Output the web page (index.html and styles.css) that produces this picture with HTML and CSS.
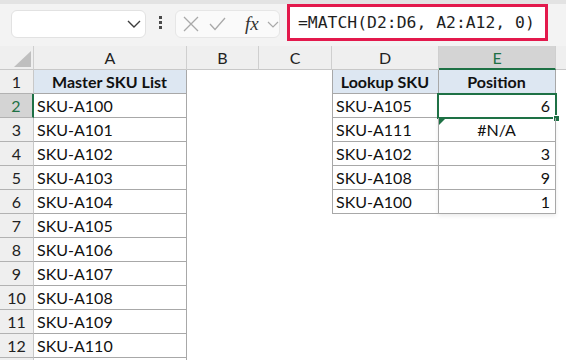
FILE: index.html
```html
<!DOCTYPE html>
<html>
<head>
<meta charset="utf-8">
<link rel="stylesheet" href="styles.css">
</head>
<body>
<div class="edge"></div>
<div class="toolbar">
  <div class="namebox">
    <svg class="nb-chev" width="14" height="8" viewBox="0 0 14 8"><path d="M1 1 L7 7 L13 1" fill="none" stroke="#3c3c3c" stroke-width="1.4"/></svg>
  </div>
  <div class="grip"><i></i><i></i><i></i></div>
  <div class="fxbox">
    <svg class="ic-x" width="16" height="16" viewBox="0 0 16 16"><path d="M1 1 L15 15 M15 1 L1 15" stroke="#a9a9a9" stroke-width="1.3" fill="none"/></svg>
    <svg class="ic-ok" width="17" height="14" viewBox="0 0 17 14"><path d="M1 7 L6 12.5 L16 1" stroke="#a9a9a9" stroke-width="1.3" fill="none"/></svg>
    <span class="fx">fx</span>
    <svg class="ic-dd" width="12" height="7" viewBox="0 0 12 7"><path d="M1 1 L6 6 L11 1" fill="none" stroke="#a9a9a9" stroke-width="1.2"/></svg>
  </div>
  <div class="formula">=MATCH(D2:D6, A2:A12, 0)</div>
</div>
<div class="sheet">
  <div class="corner"><svg width="34" height="24" viewBox="0 0 34 24"><polygon points="14,21 31,21 31,5" fill="#bfbfbf"/></svg></div>
  <div class="ch">A</div><div class="ch">B</div><div class="ch">C</div><div class="ch">D</div><div class="ch csel">E</div><div class="ch last"></div>

  <div class="rh">1</div><div class="c t hd">Master SKU List</div><div class="c"></div><div class="c"></div><div class="c t tl hd">Lookup SKU</div><div class="c t hd">Position</div><div class="c"></div>

  <div class="rh rsel">2</div><div class="c t">SKU-A100</div><div class="c"></div><div class="c"></div><div class="c t tl">SKU-A105</div><div class="c t num e2">6<div class="spill"></div><div class="active"><span class="handle"></span></div></div><div class="c"></div>

  <div class="rh">3</div><div class="c t">SKU-A101</div><div class="c"></div><div class="c"></div><div class="c t tl">SKU-A111</div><div class="c t ctr err"><span class="tri"></span>#N/A</div><div class="c"></div>

  <div class="rh">4</div><div class="c t">SKU-A102</div><div class="c"></div><div class="c"></div><div class="c t tl">SKU-A102</div><div class="c t num">3</div><div class="c"></div>

  <div class="rh">5</div><div class="c t">SKU-A103</div><div class="c"></div><div class="c"></div><div class="c t tl">SKU-A108</div><div class="c t num">9</div><div class="c"></div>

  <div class="rh">6</div><div class="c t">SKU-A104</div><div class="c"></div><div class="c"></div><div class="c t tl">SKU-A100</div><div class="c t num">1</div><div class="c"></div>

  <div class="rh">7</div><div class="c t">SKU-A105</div><div class="c"></div><div class="c"></div><div class="c"></div><div class="c"></div><div class="c"></div>
  <div class="rh">8</div><div class="c t">SKU-A106</div><div class="c"></div><div class="c"></div><div class="c"></div><div class="c"></div><div class="c"></div>
  <div class="rh">9</div><div class="c t">SKU-A107</div><div class="c"></div><div class="c"></div><div class="c"></div><div class="c"></div><div class="c"></div>
  <div class="rh">10</div><div class="c t">SKU-A108</div><div class="c"></div><div class="c"></div><div class="c"></div><div class="c"></div><div class="c"></div>
  <div class="rh">11</div><div class="c t">SKU-A109</div><div class="c"></div><div class="c"></div><div class="c"></div><div class="c"></div><div class="c"></div>
  <div class="rh">12</div><div class="c t">SKU-A110</div><div class="c"></div><div class="c"></div><div class="c"></div><div class="c"></div><div class="c"></div>
  <div class="rh"></div><div class="c t"></div><div class="c"></div><div class="c"></div><div class="c"></div><div class="c"></div><div class="c"></div>
</div>
</body>
</html>
```
FILE: styles.css
```css
* { box-sizing: border-box; }
html, body { margin: 0; padding: 0; }
body {
  width: 566px;
  height: 360px;
  overflow: hidden;
  background: #fff;
  font-family: "Lato", "Open Sans", sans-serif;
  font-size: 16px;
  color: #111;
}
.edge {
  height: 4px;
  background: #e3e3e3;
}
.toolbar {
  height: 42px;
  background: #f3f3f3;
  display: flex;
  align-items: flex-start;
  padding-left: 11px;
}
.namebox {
  margin-top: 6px;
  width: 135px;
  height: 28px;
  background: #fff;
  border: 1px solid #e2e2e2;
  border-radius: 6px;
  display: flex;
  align-items: center;
  justify-content: flex-end;
  padding-right: 4px;
}
.grip {
  width: 29px;
  height: 42px;
  display: flex;
  flex-direction: column;
  align-items: center;
  justify-content: center;
  gap: 2px;
  padding-bottom: 6px;
}
.grip i {
  display: block;
  width: 3px;
  height: 3px;
  background: #4a4a4a;
}
.fxbox {
  margin-top: 6px;
  width: 105px;
  height: 28px;
  background: #fafafa;
  border: 1px solid #e6e6e6;
  border-radius: 6px;
  display: flex;
  align-items: center;
  padding-left: 7px;
}
.ic-ok { margin-left: 10px; }
.fx {
  font-family: "Liberation Serif", serif;
  font-style: italic;
  font-size: 19px;
  color: #333;
  margin-left: 19px;
}
.ic-dd { margin-left: 8px; }
.formula {
  margin-left: 7px;
  width: 261px;
  height: 37px;
  background: #fff;
  border: 3px solid #e3194c;
  font-family: "DejaVu Sans Mono", monospace;
  font-size: 16.4px;
  line-height: 31px;
  padding-left: 8px;
  color: #1e1e1e;
  white-space: nowrap;
}
.sheet {
  display: grid;
  grid-template-columns: 34px 153px 72px 73px 107px 117px 1fr;
  grid-auto-rows: 24px;
}
.corner {
  background: #efefef;
  border-right: 1px solid #cfcfcf;
  border-bottom: 1px solid #c8c8c8;
}
.corner svg { display: block; }
.ch {
  background: #efefef;
  border-right: 1px solid #cfcfcf;
  border-bottom: 1px solid #c8c8c8;
  text-align: center;
  line-height: 23px;
  color: #222;
}
.ch.last { border-right: none; }
.ch.csel {
  background: #d4d4d4;
  color: #1e7145;
  border-bottom: 2px solid #1e7145;
}
.rh {
  background: #efefef;
  border-right: 1px solid #c8c8c8;
  border-bottom: 1px solid #b2b2b2;
  text-align: center;
  line-height: 24px;
  color: #222;
}
.rh.rsel {
  background: #d4d4d4;
  color: #1e7145;
  border-right: 2px solid #1e7145;
}
.c {
  padding: 0 4px 0 3px;
  line-height: 24px;
  white-space: nowrap;
  position: relative;
}
.t {
  border-right: 1px solid #a8a8a8;
  border-bottom: 1px solid #a8a8a8;
}
.tl { border-left: 1px solid #a8a8a8; }
.hd {
  background: #dde7f2;
  font-weight: bold;
  text-align: center;
}
.num { text-align: right; padding-right: 5px; }
.ctr { text-align: center; }
.spill {
  position: absolute;
  left: -1px;
  top: -1px;
  right: -1px;
  height: 121px;
  border: 1px solid #3f72d4;
  box-shadow: 0 2px 4px rgba(0,0,0,0.08);
  pointer-events: none;
}
.active {
  position: absolute;
  left: -2px;
  top: -1px;
  right: -2px;
  bottom: -2px;
  border: 2px solid #1e7145;
}
.handle {
  position: absolute;
  right: -5px;
  bottom: -5px;
  width: 7px;
  height: 7px;
  background: #1e7145;
  border: 1px solid #fff;
}
.tri {
  position: absolute;
  left: 0;
  top: 0;
  width: 0;
  height: 0;
  border-top: 7px solid #1e7145;
  border-right: 7px solid transparent;
}
```
